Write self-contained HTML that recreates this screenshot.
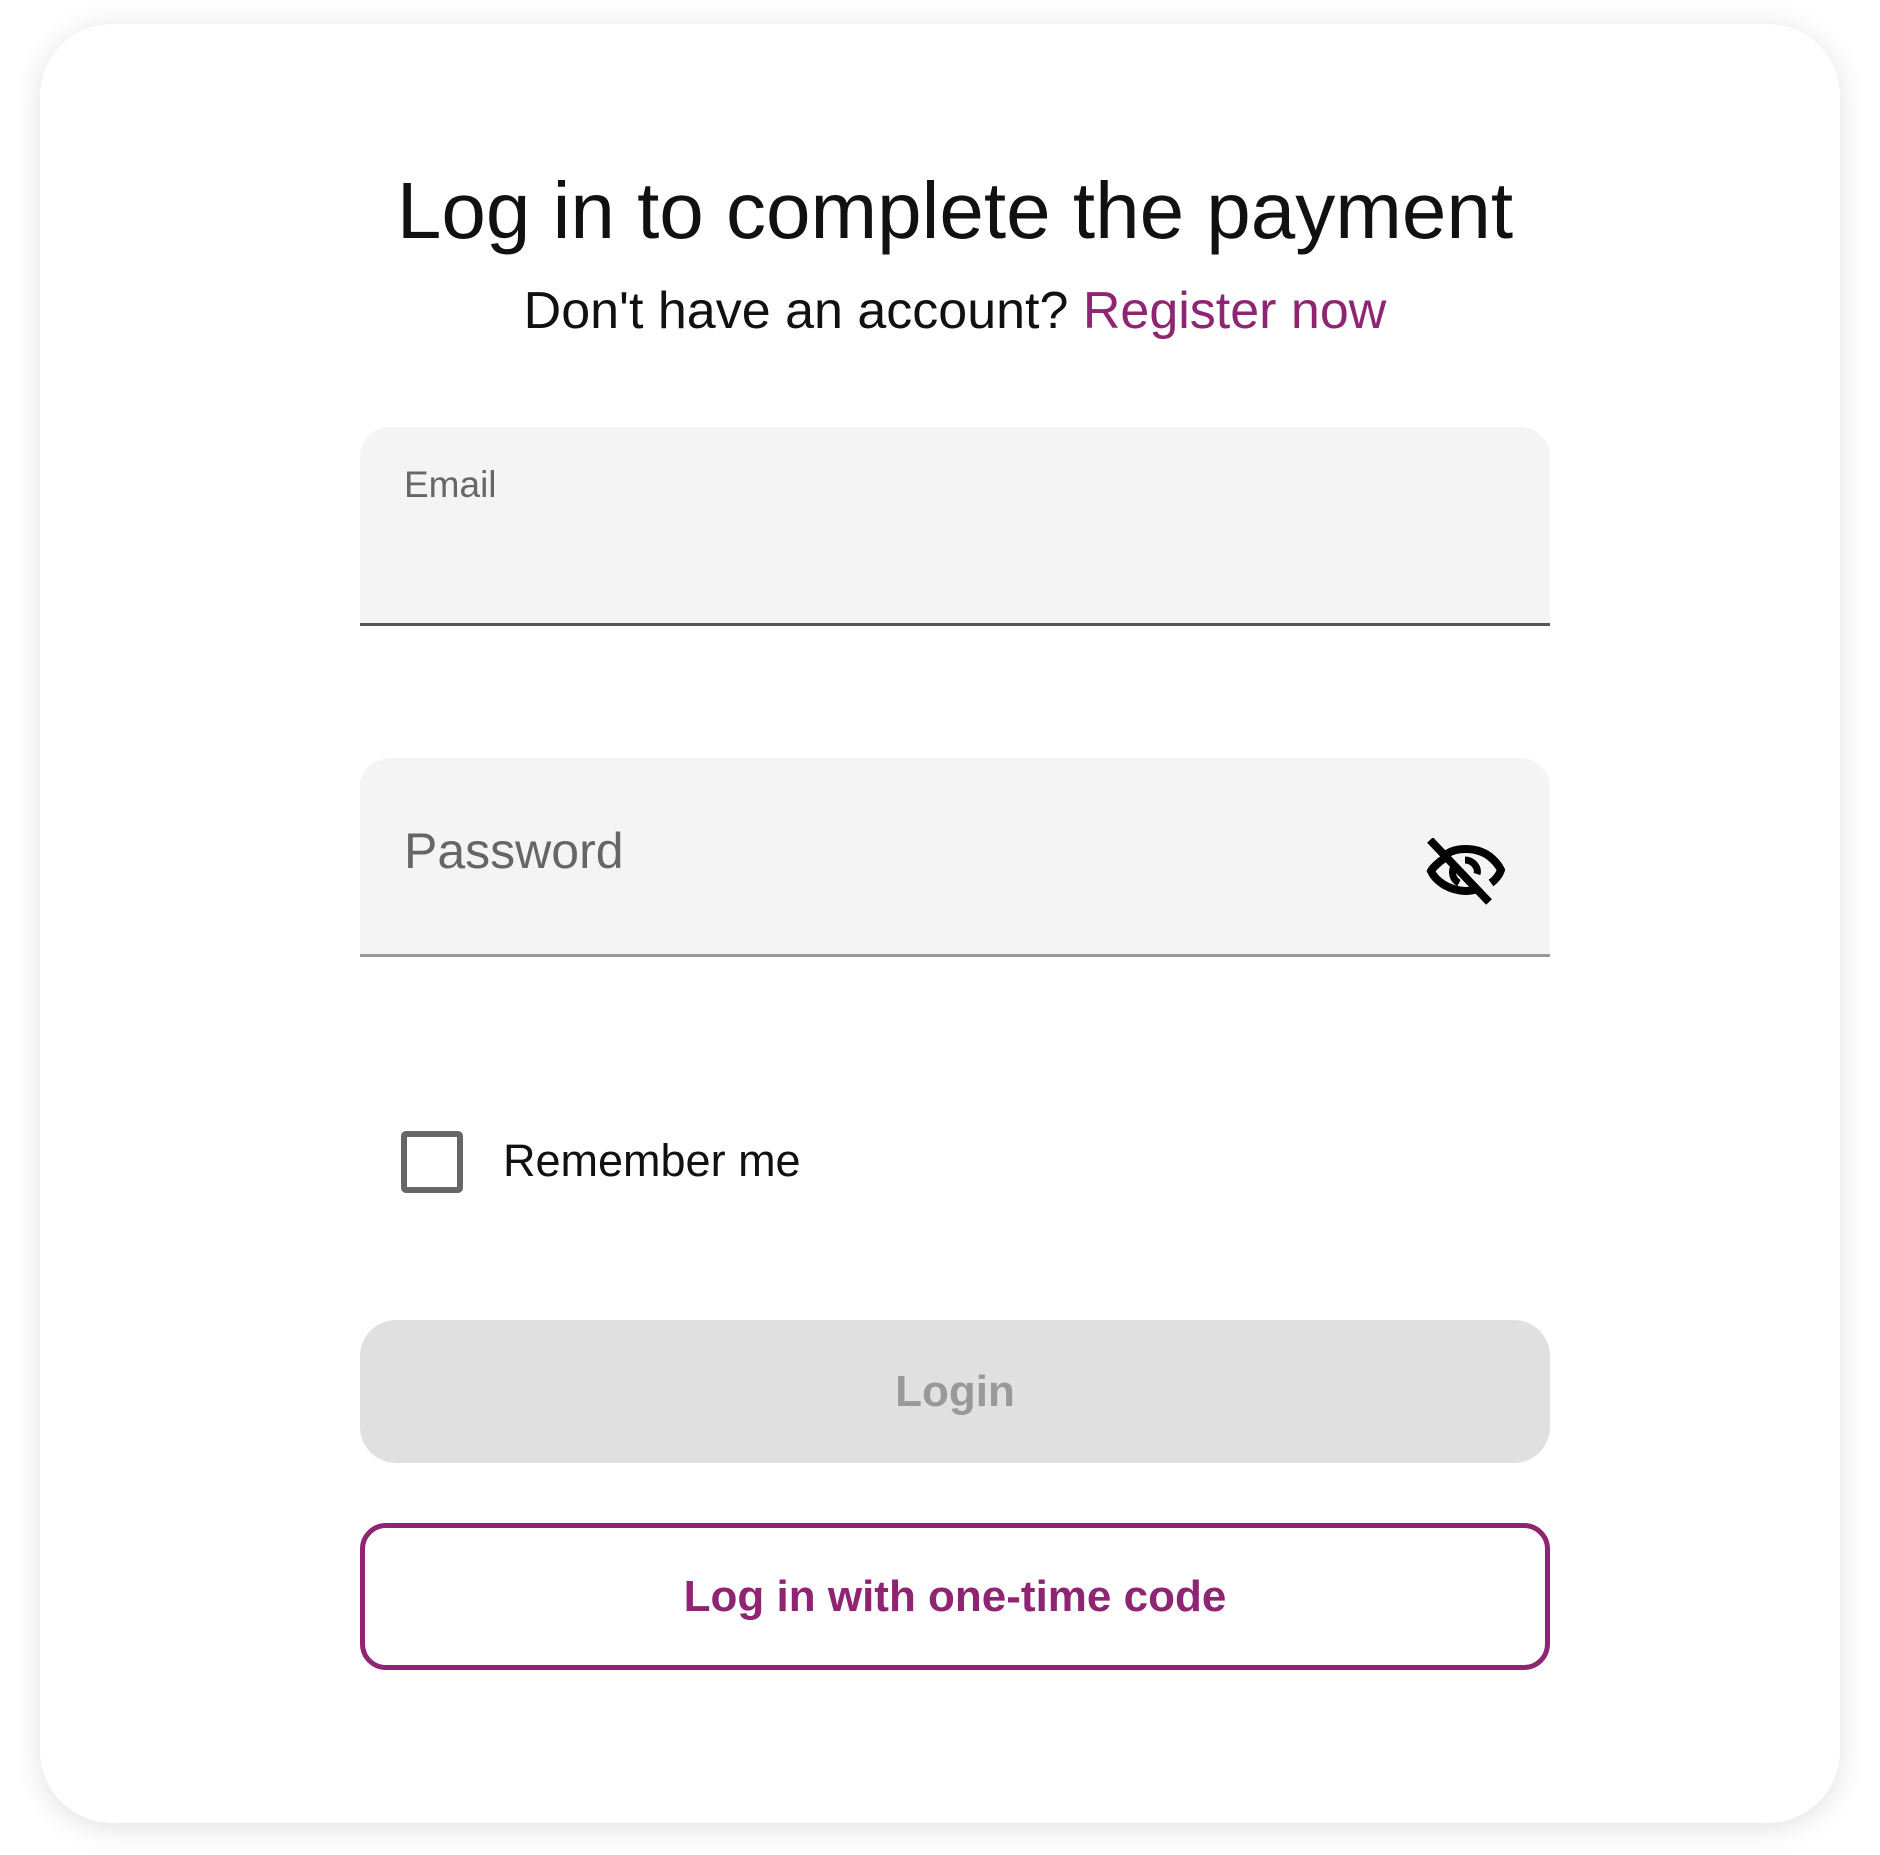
<!DOCTYPE html>
<html><head><style>
body{margin:0;width:1880px;height:1855px;background:#fff;font-family:"Liberation Sans",sans-serif;position:relative;overflow:hidden}
.card{position:absolute;left:40px;top:24px;width:1800px;height:1799px;border-radius:72px;background:#fff;box-shadow:0 4px 30px rgba(0,0,0,0.12)}
.abs{position:absolute}
h1{position:absolute;left:15px;width:1880px;top:165px;margin:0;text-align:center;font-weight:normal;font-size:80px;color:#111}
.sub{left:15px;width:1880px;top:281px;text-align:center;font-size:52px;color:#111}
.sub span{color:#8e2472}
.field{left:360px;width:1190px;background:#f4f4f4;border-radius:30px 30px 0 0}
</style></head><body>
<div class="card"></div>
<h1>Log in to complete the payment</h1>
<div class="abs sub">Don't have an account? <span>Register now</span></div>
<div class="abs field" style="top:427px;height:196px;border-bottom:3px solid #555"></div>
<div class="abs" style="left:404px;top:464px;font-size:37px;color:#666">Email</div>
<div class="abs field" style="top:758px;height:196px;border-bottom:3px solid #999"></div>
<div class="abs" style="left:404px;top:822px;font-size:50px;color:#666">Password</div>
<svg class="abs" style="left:1425px;top:838px" width="80" height="70" viewBox="0 0 80 70">
<path d="M22 16 C30 10 50 8 64 18 C72 24 75 30 76 32 C74 38 70 42 66 45" fill="none" stroke="#000" stroke-width="8"/>
<path d="M20 20 C12 25 7 31 6 33 C10 42 22 52 40 53 C46 53 50 52 53 51" fill="none" stroke="#000" stroke-width="8"/>
<path d="M30 26 C25 34 28 42 34 45 M40 22 C48 22 54 30 52 36" fill="none" stroke="#000" stroke-width="7"/>
<path d="M5 2 L64 64" stroke="#000" stroke-width="8"/>
</svg>
<div class="abs" style="left:401px;top:1131px;width:50px;height:50px;border:6px solid #666;border-radius:5px"></div>
<div class="abs" style="left:503px;top:1135px;font-size:45px;color:#111">Remember me</div>
<div class="abs" style="left:360px;top:1320px;width:1190px;height:143px;background:#e0e0e0;border-radius:36px;text-align:center;line-height:143px;font-size:44px;font-weight:bold;color:#999">Login</div>
<div class="abs" style="left:360px;top:1523px;width:1180px;height:137px;border:5px solid #8e2472;border-radius:26px;text-align:center;line-height:137px;font-size:44px;font-weight:bold;color:#8e2472">Log in with one-time code</div>
</body></html>
